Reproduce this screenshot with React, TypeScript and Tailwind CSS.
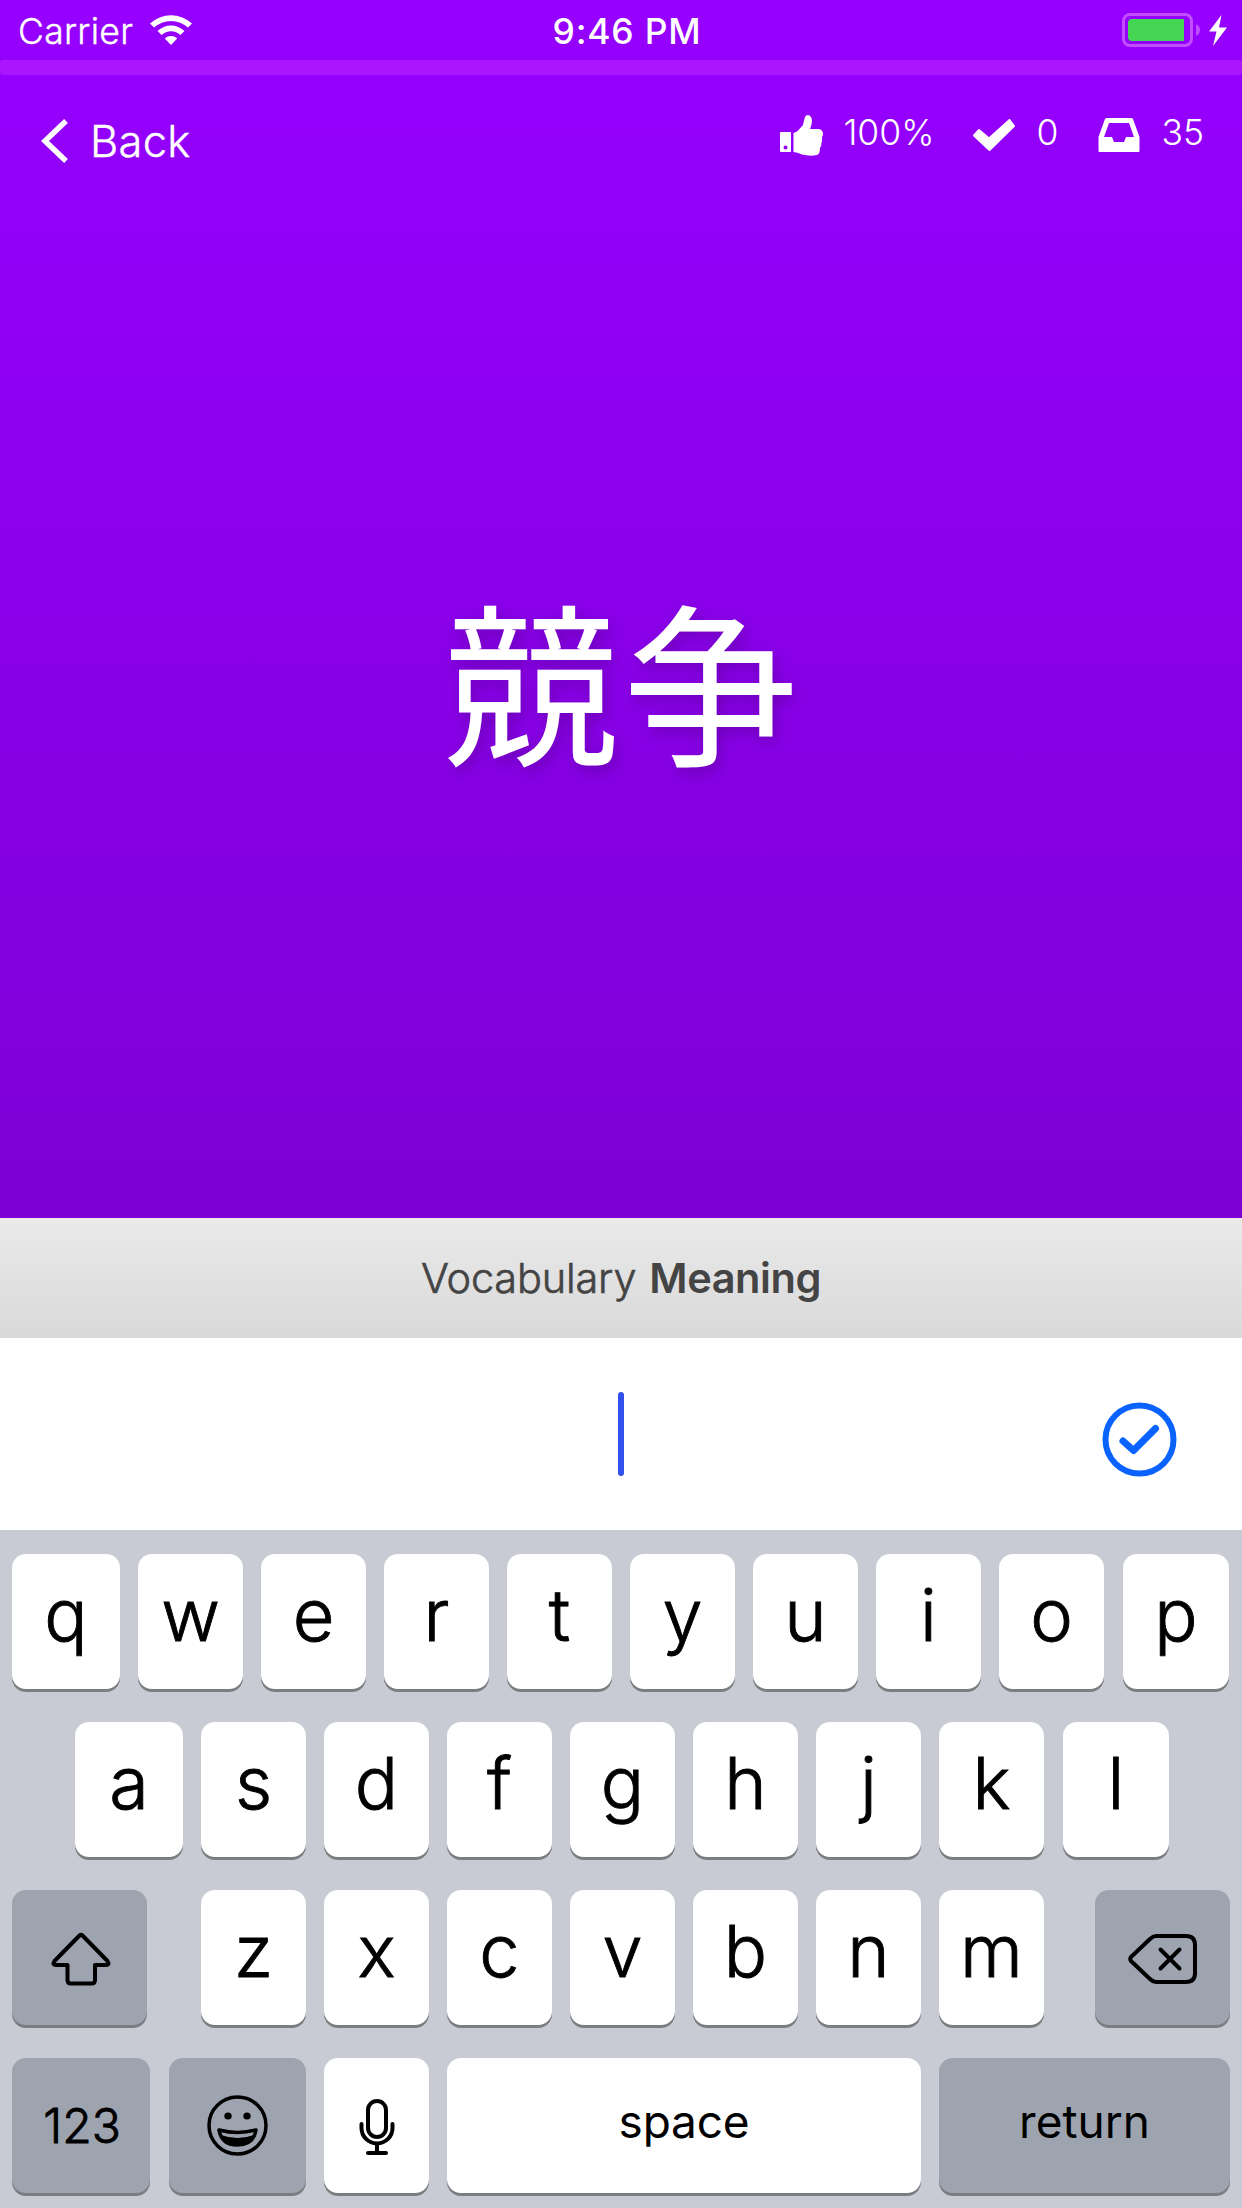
import React from 'react';

const LETTER = 'text-[72px] font-light [-webkit-text-stroke:0.9px_#000]';

function Key({ w, ml = '', dark = false, children, ch = false }: { w: string; ml?: string; dark?: boolean; ch?: boolean; children: React.ReactNode }) {
  return (
    <div
      className={`${w} ${ml} ${dark ? 'bg-[#9da4b0]' : 'bg-white'} flex h-[135px] shrink-0 items-center justify-center rounded-[14px] text-black shadow-[0_3px_0_#7b7d81]`}
    >
      {ch ? <span className={`${LETTER} -mt-[14px] leading-[100px]`}>{children}</span> : children}
    </div>
  );
}

function Letters({ letters }: { letters: string }) {
  return (
    <>
      {letters.split('').map((c) => (
        <Key key={c} w="w-[105px]" ml="ml-[18px]" ch>
          {c}
        </Key>
      ))}
    </>
  );
}

export default function App() {
  return (
    <div className="flex h-[2208px] w-[1242px] flex-col overflow-hidden bg-white font-['Inter',sans-serif]">
      <div className="flex h-[1218px] flex-col bg-linear-to-b from-[#9600ff] to-[#7e00d5] text-white">
        <div className="flex h-[60px] items-start">
          <div className="flex w-[414px] items-start">
            <span className="ml-[18px] mt-[10px] text-[35.5px] leading-[44px] font-light tracking-[0.3px] [-webkit-text-stroke:0.4px_#fff]">Carrier</span>
            <svg className="ml-[17px] mt-[15px]" width="42" height="30" viewBox="0 0 42 30" fill="#fff">
              <path d="M0 8.5A31 31 0 0 1 42 8.5L38 12.6A25 25 0 0 0 4 12.6Z" />
              <path d="M7.500 16A19.500 19.500 0 0 1 34.500 16L30.400 20.100A13.500 13.500 0 0 0 11.600 20.100Z" />
              <path d="M14.800 23.500A9 9 0 0 1 27.200 23.500L21 30Z" />
            </svg>
          </div>
          <div className="w-[414px] pl-[12px] pt-[10px] text-center text-[35.5px] leading-[44px] font-medium tracking-[0.8px]">9:46 PM</div>
          <div className="flex w-[414px] justify-end pr-[14px] pt-[13px]">
            <svg width="106" height="34" viewBox="0 0 106 34">
              <rect x="1.500" y="1.500" width="68" height="31" rx="6.500" fill="none" stroke="#c14dff" strokeWidth="3" />
              <path d="M10 6H62V28H10Q6 28 6 24V10Q6 6 10 6Z" fill="#45d654" />
              <path d="M74 11Q78 13 78 17T74 23Z" fill="#c14dff" />
              <path d="M99.500 2L87 18.500H94.500L91 33L105 14.500H97Z" fill="#fff" />
            </svg>
          </div>
        </div>
        <div className="h-[15px] rounded-[3px] bg-[#ac16ff]" />
        <div className="flex h-[110px] items-start justify-between">
          <div className="flex items-start">
            <svg className="ml-[41px] mt-[43px]" width="29" height="46" viewBox="0 0 29 46" fill="none" stroke="#fff" strokeWidth="5.500">
              <path d="M25 3L4 23L25 43" />
            </svg>
            <span className="ml-[20px] mt-[40px] text-[43.5px] leading-[52px] font-light tracking-[0.3px] [-webkit-text-stroke:0.4px_#fff]">Back</span>
          </div>
          <div className="flex items-start text-[35.5px] leading-[44px] font-light">
            <svg className="mt-[40px]" width="43" height="41" viewBox="0 0 43 41" fill="#fff">
              <path fillRule="evenodd" d="M1 17H10Q11 17 11 18V36Q11 37 10 37H1Q0 37 0 36V18Q0 17 1 17ZM5.500 30.500A2 2 0 1 0 5.500 34.500A2 2 0 1 0 5.500 30.500Z" />
              <path d="M13.500 18L17 16.500Q20 13.500 23 10Q24 5 25 2Q26 0 28 0Q32 1 32 6Q32 9 30 14H39Q43 15 43 19Q43 21 42 22Q42.500 25 41.500 28Q41.500 31 40 33Q40 39 37 40Q30 41.500 22 39.500Q17 37 13.500 37Z" />
            </svg>
            <span className="ml-[20px] mt-[36px]">100%</span>
            <svg className="ml-[39px] mt-[44px]" width="42" height="32" viewBox="0 0 42 32" fill="#fff" stroke="#fff" strokeWidth="2" strokeLinejoin="round">
              <path d="M1 16.500L6 11L16 19.500L36.500 1L41 7L16.500 31Z" />
            </svg>
            <span className="ml-[21px] mt-[36px]">0</span>
            <svg className="ml-[40px] mt-[43px]" width="42" height="34" viewBox="0 0 42 34" fill="#fff" fillRule="evenodd">
              <path d="M9 0H33Q34.500 0 35 1L41.500 19V33Q41.500 34 40.500 34H1.500Q.5 34 .5 33V19L7 1Q7.500 0 9 0ZM11 5L6 19H14L16 24H26L28 19H36L31 5Z" />
            </svg>
            <span className="ml-[21px] mr-[38px] mt-[36px]">35</span>
          </div>
        </div>
        <div className="pl-[5px] pt-[362px] text-center font-['Noto_Sans_CJK_JP',sans-serif] text-[175px] leading-[260px] tracking-[5px] [text-shadow:3px_6px_15px_rgba(0,0,0,0.2)]">競争</div>
      </div>
      <div className="flex h-[120px] items-center justify-center bg-linear-to-b from-[#eaeaea] to-[#d9d9d9] text-[41.5px] text-[#444]">
        <span className="font-light tracking-[-0.2px] [-webkit-text-stroke:0.6px_#444]">Vocabulary</span>
        <span className="ml-[13px] font-semibold tracking-[-0.4px]">Meaning</span>
      </div>
      <div className="flex h-[192px] items-start justify-end">
        <div className="mt-[54px] h-[84px] w-[6px] rounded-full bg-[#3450ec]" />
        <svg className="ml-[478px] mr-[65px] mt-[64px]" width="75" height="75" viewBox="0 0 75 75" fill="none" stroke="#0a62ff" strokeWidth="6">
          <circle cx="37.500" cy="37.500" r="34" />
          <path d="M21 39L31.500 48.500L53.500 26.500" strokeWidth="7" strokeLinecap="round" strokeLinejoin="round" />
        </svg>
      </div>
      <div className="flex h-[678px] flex-col gap-[33px] bg-[#c8cbd3] pt-[24px]">
        <div className="flex">
          <Key w="w-[108px]" ml="ml-[12px]" ch>q</Key>
          <Letters letters="wertyuio" />
          <Key w="w-[106px]" ml="ml-[19px]" ch>p</Key>
        </div>
        <div className="flex">
          <Key w="w-[108px]" ml="ml-[75px]" ch>a</Key>
          <Letters letters="sdfghjk" />
          <Key w="w-[106px]" ml="ml-[19px]" ch>l</Key>
        </div>
        <div className="flex">
          <Key w="w-[135px]" ml="ml-[12px]" dark>
            <svg className="ml-[3px] mt-[3px]" width="60" height="54" viewBox="0 0 60 54" fill="none" stroke="#000" strokeWidth="4" strokeLinejoin="round">
              <path d="M28.500 3.500Q30 2 31.500 3.500L56.500 29Q59 33 55 33H44V48Q44 51.500 40.500 51.500H20Q16.500 51.500 16.500 48V33H5Q1 33 3.500 29Z" />
            </svg>
          </Key>
          <Key w="w-[105px]" ml="ml-[54px]" ch>z</Key>
          <Letters letters="xcvbnm" />
          <Key w="w-[135px]" ml="ml-[51px]" dark>
            <svg className="ml-[1px] mt-[3px]" width="70" height="50" viewBox="0 0 70 50" fill="none" stroke="#000" strokeWidth="4" strokeLinecap="round" strokeLinejoin="round">
              <path d="M28 2H58Q67 2 67 11V39Q67 48 58 48H28Q25 48 22 45L3 27Q1.500 25 3 23L22 5Q25 2 28 2Z" />
              <path d="M32.500 15.500L51.500 34.500M51.500 15.500L32.500 34.500" />
            </svg>
          </Key>
        </div>
        <div className="flex">
          <Key w="w-[138px]" ml="ml-[12px]" dark>
            <span className="ml-[2px] text-[48px] font-light [-webkit-text-stroke:0.9px_#000]">123</span>
          </Key>
          <Key w="w-[137px]" ml="ml-[19px]" dark>
            <svg width="61" height="61" viewBox="0 0 61 61" fill="none" stroke="#000" strokeWidth="3.500">
              <circle cx="30.500" cy="30.500" r="28.500" />
              <ellipse cx="21" cy="21" rx="3.700" ry="3.500" fill="#000" stroke="none" />
              <ellipse cx="40" cy="21" rx="3.700" ry="3.500" fill="#000" stroke="none" />
              <path d="M12 35Q30.500 40 49 35Q46.500 50 30.500 50T12 35Z" strokeLinejoin="round" />
              <path d="M14 40Q30.500 46 47 40Q43 50 30.500 50T14 40Z" fill="#000" stroke="none" />
            </svg>
          </Key>
          <Key w="w-[105px]" ml="ml-[18px]">
            <svg className="mt-[3px] ml-[1px]" width="36" height="56" viewBox="0 0 36 56" fill="none" stroke="#000" strokeWidth="4" strokeLinecap="round">
              <rect x="9" y="2" width="18" height="36" rx="9" />
              <path d="M2.500 25V29A15.500 15.500 0 0 0 33.500 29V25M18 45V54M9 54H27" />
            </svg>
          </Key>
          <Key w="w-[474px]" ml="ml-[18px]">
            <span className="-mt-[9px] text-[46px] tracking-[-0.2px]">space</span>
          </Key>
          <Key w="w-[291px]" ml="ml-[18px]" dark>
            <span className="-mt-[9px] text-[46px]">return</span>
          </Key>
        </div>
      </div>
    </div>
  );
}
